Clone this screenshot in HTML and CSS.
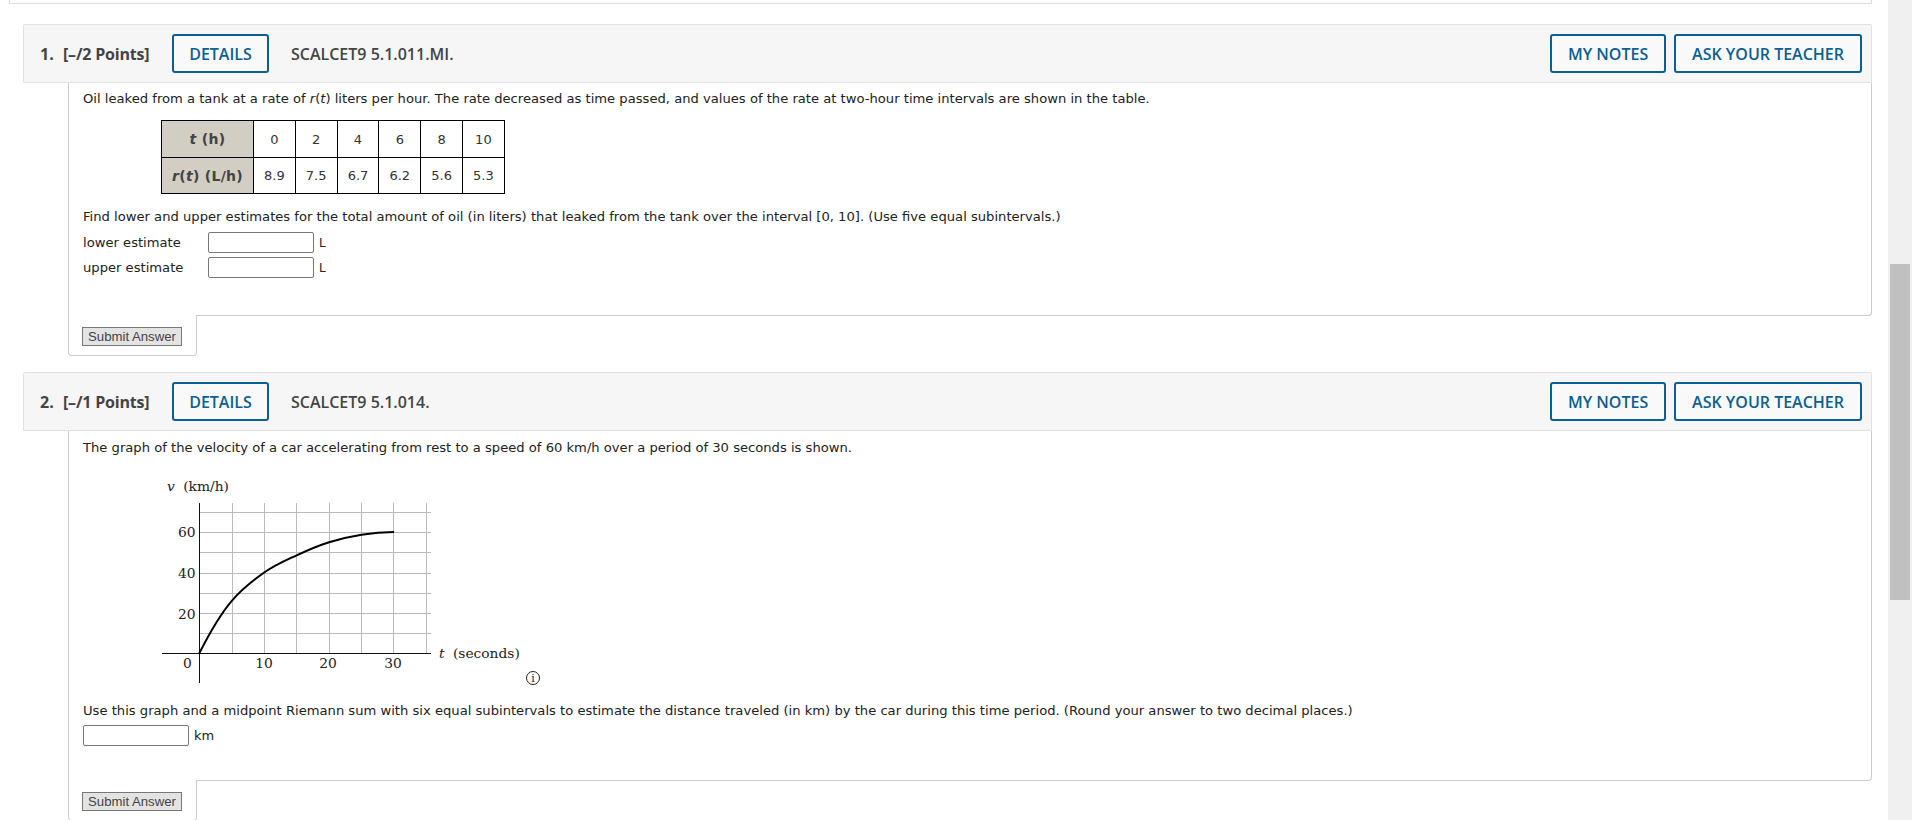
FILE: index.html
```html
<!DOCTYPE html>
<html lang="en">
<head>
    <meta charset="UTF-8">
    <title>SCALCET9 5.1 Assignment</title>
    <link rel="stylesheet" href="styles.css">
</head>
<body>
    <div class="page">
        <main class="content">
            <div class="prev-box"></div>

            <section class="question">
                <header class="q-head">
                    <span class="q-num">1.</span>
                    <span class="q-points">[&ndash;/2 Points]</span>
                    <a class="btn btn-details">DETAILS</a>
                    <span class="q-code">SCALCET9 5.1.011.MI.</span>
                    <a class="btn btn-notes">MY NOTES</a>
                    <a class="btn">ASK YOUR TEACHER</a>
                </header>
                <div class="q-body">
                    <div class="q-main q-main-1">
                        <p class="q-first">Oil leaked from a tank at a rate of <i>r</i>(<i>t</i>) liters per hour. The rate decreased as time passed, and values of the rate at two-hour time intervals are shown in the table.</p>
                        <table class="rate-table">
                            <tr class="row-t">
                                <th><i>t</i> (h)</th>
                                <td>0</td><td>2</td><td>4</td><td>6</td><td>8</td><td>10</td>
                            </tr>
                            <tr>
                                <th><i>r</i>(<i>t</i>) (L/h)</th>
                                <td>8.9</td><td>7.5</td><td>6.7</td><td>6.2</td><td>5.6</td><td>5.3</td>
                            </tr>
                        </table>
                        <p class="q-find">Find lower and upper estimates for the total amount of oil (in liters) that leaked from the tank over the interval [0, 10]. (Use five equal subintervals.)</p>
                        <div class="answer-row">
                            <label class="answer-label">lower estimate</label>
                            <input class="answer-input" type="text">
                            <span class="answer-unit">L</span>
                        </div>
                        <div class="answer-row">
                            <label class="answer-label">upper estimate</label>
                            <input class="answer-input" type="text">
                            <span class="answer-unit">L</span>
                        </div>
                    </div>
                    <div class="submit-tab"><button class="submit-btn">Submit Answer</button></div>
                </div>
            </section>

            <section class="question">
                <header class="q-head">
                    <span class="q-num">2.</span>
                    <span class="q-points">[&ndash;/1 Points]</span>
                    <a class="btn btn-details">DETAILS</a>
                    <span class="q-code">SCALCET9 5.1.014.</span>
                    <a class="btn btn-notes">MY NOTES</a>
                    <a class="btn">ASK YOUR TEACHER</a>
                </header>
                <div class="q-body">
                    <div class="q-main q-main-2">
                        <p class="q-first">The graph of the velocity of a car accelerating from rest to a speed of 60 km/h over a period of 30 seconds is shown.</p>
                        <svg class="graph" width="400" height="220" viewBox="0 0 400 220">
                            <g class="grid">
                                <path d="M72.5 32V182M104.5 32V182M136.5 32V182M169.5 32V182M201.5 32V182M233.5 32V182M266.5 32V182"/>
                                <path d="M39 41.5H271M39 61.5H271M39 81.5H271M39 102.5H271M39 122.5H271M39 142.5H271M39 162.5H271"/>
                            </g>
                            <path class="axis" d="M2 182.5H271M39.5 32V212"/>
                            <path class="curve" d="M39.3 182.3C50 161 61 142.5 71.8 129.8C82.6 117.1 93.4 109.1 104.2 101.5C115 93.9 125.8 89.35 136.6 84.3C147.4 79.25 158.3 74.6 169.1 71.2C179.9 67.8 190.7 65.4 201.5 63.7C212.3 62 223 61.1 234 61.1"/>
                            <text x="7" y="19.5"><tspan class="var">v</tspan> <tspan dx="4">(km/h)</tspan></text>
                            <text x="18" y="66">60</text>
                            <text x="18" y="107">40</text>
                            <text x="18" y="148">20</text>
                            <text x="23" y="197">0</text>
                            <text x="104" y="197" text-anchor="middle">10</text>
                            <text x="168" y="197" text-anchor="middle">20</text>
                            <text x="233" y="197" text-anchor="middle">30</text>
                            <text x="279" y="187"><tspan class="var">t</tspan> <tspan dx="4">(seconds)</tspan></text>
                            <circle class="info-ring" cx="373" cy="207" r="6.5"/>
                            <text class="info-i" x="373" y="211" text-anchor="middle">i</text>
                        </svg>
                        <p class="q-use">Use this graph and a midpoint Riemann sum with six equal subintervals to estimate the distance traveled (in km) by the car during this time period. (Round your answer to two decimal places.)</p>
                        <div class="answer-row">
                            <input class="answer-input" type="text">
                            <span class="answer-unit">km</span>
                        </div>
                    </div>
                    <div class="submit-tab"><button class="submit-btn">Submit Answer</button></div>
                </div>
            </section>
        </main>
        <div class="scrollbar"><div class="scroll-thumb"></div></div>
    </div>
</body>
</html>
```
FILE: styles.css
```css
html, body {
    margin: 0;
    height: 820px;
    overflow: hidden;
    background: #fff;
}
body {
    font-family: "DejaVu Sans", Verdana, sans-serif;
    font-size: 13.14px;
    color: #222;
}
p {
    margin: 0;
}
.page {
    display: flex;
    height: 820px;
}
.content {
    flex: 1;
    min-width: 0;
    padding-right: 16px;
}
.scrollbar {
    width: 24px;
    padding: 264px 2px 0;
    box-sizing: border-box;
    background: #f0f0f0;
}
.scroll-thumb {
    height: 336px;
    background: #c0c0c0;
}
.prev-box {
    height: 3px;
    margin-left: 9px;
    border-left: 1px solid #ddd;
    border-right: 1px solid #ddd;
    border-bottom: 1px solid #ddd;
    margin-bottom: 20px;
}
.question {
    margin-left: 23px;
    margin-bottom: 16px;
}
.q-head {
    display: flex;
    align-items: center;
    height: 57px;
    padding: 0 9px 0 16px;
    background: #f6f6f6;
    border: 1px solid #e2e2e2;
    border-radius: 2px 2px 0 0;
    font-family: "Open Sans", sans-serif;
    font-size: 16px;
    font-weight: 600;
    color: #444;
    white-space: nowrap;
}
.q-num {
    width: 23px;
    font-weight: 700;
}
.q-points {
    width: 109px;
    font-weight: 700;
    letter-spacing: -0.2px;
}
.btn {
    box-sizing: border-box;
    height: 39px;
    padding: 0 16px;
    display: flex;
    align-items: center;
    border: 2px solid #0b5f92;
    border-radius: 3px;
    color: #0b5f92;
    background: #f9f9f9;
    font-weight: 600;
}
.btn-details {
    width: 97px;
    justify-content: center;
}
.q-code {
    flex: 1;
    margin-left: 22px;
}
.btn-notes {
    width: 116px;
    padding: 0;
    justify-content: center;
    margin-right: 8px;
}
.q-body {
    margin-left: 45px;
}
.q-main {
    box-sizing: border-box;
    padding: 8px 14px 0;
    background: #fff;
    border: 1px solid #ccc;
    border-top: none;
    border-radius: 0 0 4px 0;
}
.q-main-1 {
    height: 233px;
}
.q-main-2 {
    height: 350px;
    padding-top: 9px;
}
.q-first {
    line-height: 16px;
}
.rate-table {
    margin: 13px 0 0 78px;
    border-collapse: collapse;
}
.rate-table th, .rate-table td {
    border: 1px solid #000;
    height: 35px;
    padding: 0;
    text-align: center;
    font-size: 13px;
    color: #333;
}
.row-t th, .row-t td {
    height: 36px;
}
.rate-table th {
    width: 91px;
    background: #d2cec4;
    font-size: 14px;
    letter-spacing: 0.3px;
    font-weight: 700;
    color: #444;
}
.rate-table td {
    width: 40.8px;
}
.q-find {
    margin-top: 15px;
    line-height: 16px;
}
.answer-row {
    display: flex;
    align-items: center;
    height: 25px;
}
.q-find + .answer-row {
    margin-top: 5px;
}
.answer-label {
    width: 125px;
}
.answer-input {
    box-sizing: border-box;
    width: 106px;
    height: 21px;
    padding: 0;
    background: #fff;
    border: 1px solid #777;
    border-radius: 2px;
}
.answer-unit {
    margin-left: 5px;
    font-size: 12px;
}
.submit-tab {
    box-sizing: border-box;
    width: 129px;
    height: 41px;
    margin-top: -1px;
    padding: 12px 0 0 13px;
    background: #fff;
    border: 1px solid #ccc;
    border-top: none;
    border-radius: 0 0 4px 4px;
}
.submit-btn {
    display: block;
    box-sizing: border-box;
    width: 100px;
    height: 19px;
    padding: 0;
    background: #e3e3e3;
    border: 1px solid #777;
    font-family: "Liberation Sans", Arial, sans-serif;
    font-size: 13.2px;
    color: #444;
}
.graph {
    display: block;
    margin: 15px 0 0 77px;
    font-family: "DejaVu Serif", serif;
    font-size: 13.8px;
    fill: #222;
}
.grid path {
    stroke: #bbb;
    stroke-width: 1;
    fill: none;
}
.axis {
    stroke: #111;
    stroke-width: 1;
    fill: none;
}
.curve {
    stroke: #000;
    stroke-width: 2;
    fill: none;
}
.var {
    font-style: italic;
}
.info-ring {
    stroke: #222;
    stroke-width: 1;
    fill: none;
}
.info-i {
    font-size: 11px;
}
.q-use {
    margin-top: 12px;
    line-height: 16px;
}
.q-use + .answer-row {
    margin-top: 4px;
}
.q-use + .answer-row .answer-unit {
    font-size: 13px;
}
```
